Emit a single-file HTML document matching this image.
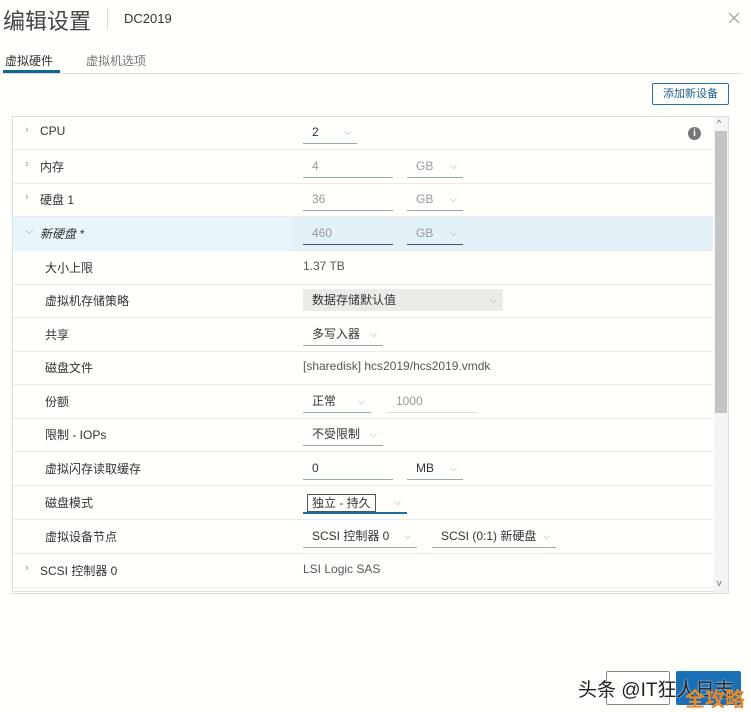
<!DOCTYPE html>
<html><head><meta charset="utf-8"><style>
*{margin:0;padding:0;box-sizing:border-box}
body{width:751px;height:711px;background:#fffffc;font-family:"Liberation Sans","Noto Sans CJK SC",sans-serif;color:#333;position:relative;overflow:hidden;font-size:12px}
.a{position:absolute;white-space:nowrap}
.row{position:absolute;left:13px;width:700px;height:34px;border-bottom:1px solid #eceae4}
.lab{position:absolute;top:8px;font-size:12px;color:#333}
.sel{position:absolute;top:8px;height:20px;border-bottom:1px solid #9aa;font-size:12px;padding-left:9px;line-height:16px;color:#333}
.dim{color:#999}
.chev{position:absolute;right:6px;top:0;color:#999;font-size:9px}
.arr{position:absolute;left:12px;top:8px;color:#999;font-size:11px}
</style></head><body>
<div class="a" style="left:3px;top:4px;font-size:22px;color:#444">编辑设置</div>
<div class="a" style="left:107px;top:8px;width:1px;height:22px;background:#ddd"></div>
<div class="a" style="left:124px;top:11px;font-size:13px;color:#333">DC2019</div>
<svg class="a" style="left:728px;top:12px" width="12" height="12"><path d="M1 1L11 11M11 1L1 11" stroke="#999" stroke-width="1.2"/></svg>
<div class="a" style="left:5px;top:52px;font-size:12px;color:#333">虚拟硬件</div>
<div class="a" style="left:3px;top:70px;width:57px;height:3px;background:#0f6a8f"></div>
<div class="a" style="left:86px;top:52px;font-size:12px;color:#777">虚拟机选项</div>
<div class="a" style="left:0;top:73px;width:741px;height:1px;background:#ddd"></div>
<div class="a" style="left:652px;top:83px;width:77px;height:22px;border:1px solid #2a6f9b;border-radius:2px;font-size:11px;color:#1a5f8f;text-align:center;line-height:20px">添加新设备</div>
<div class="a" style="left:12px;top:116px;width:717px;height:478px;border:1px solid #ddd;background:#fffffc"></div>
<div class="a" style="left:714px;top:117px;width:14px;height:476px;background:#f4f4f2"></div>
<div class="a" style="left:715px;top:131px;width:12px;height:282px;background:#c4c4c4"></div>
<div class="a" style="left:717px;top:118px;font-size:9px;color:#666">^</div>
<div class="a" style="left:717px;top:578px;font-size:9px;color:#666">v</div>
<div class="a" style="left:14px;top:591px;width:700px;height:2px;border-top:1px solid #ddd"></div>

<div class="row" style="top:116px"><span class="arr">›</span><span class="lab" style="left:27px">CPU</span><div class="sel" style="left:290px;width:54px">2<span class="chev">⌵</span></div><div class="a" style="left:675px;top:11px;width:13px;height:13px;border-radius:50%;background:#777;color:#fff;font-size:10px;text-align:center;line-height:13px;font-weight:bold">i</div></div>
<div class="row" style="top:150px"><span class="arr">›</span><span class="lab" style="left:27px">内存</span><div class="sel dim" style="left:290px;width:90px">4</div><div class="sel dim" style="left:394px;width:56px">GB<span class="chev">⌵</span></div></div>
<div class="row" style="top:183px"><span class="arr">›</span><span class="lab" style="left:27px">硬盘 1</span><div class="sel dim" style="left:290px;width:90px">36</div><div class="sel dim" style="left:394px;width:56px">GB<span class="chev">⌵</span></div></div>
<div class="row" style="top:217px;background:#e3f1f8"><div class="a" style="left:0;top:0;width:278px;height:34px;background:#e8f6fb"></div><span class="arr">⌵</span><span class="lab" style="left:27px;font-style:italic">新硬盘 *</span><div class="sel dim" style="left:290px;width:90px;border-color:#456">460</div><div class="sel dim" style="left:394px;width:56px;border-color:#456">GB<span class="chev">⌵</span></div></div>
<div class="row" style="top:251px"><span class="lab" style="left:32px">大小上限</span><span class="lab" style="left:290px;color:#555">1.37 TB</span></div>
<div class="row" style="top:284px"><span class="lab" style="left:32px">虚拟机存储策略</span><div class="a" style="left:290px;top:5px;width:200px;height:22px;background:#ebebe8;padding-left:9px;line-height:22px">数据存储默认值<span class="chev" style="top:0">⌵</span></div></div>
<div class="row" style="top:318px"><span class="lab" style="left:32px">共享</span><div class="sel" style="left:290px;width:80px">多写入器<span class="chev">⌵</span></div></div>
<div class="row" style="top:351px"><span class="lab" style="left:32px">磁盘文件</span><span class="lab" style="left:290px;color:#555">[sharedisk] hcs2019/hcs2019.vmdk</span></div>
<div class="row" style="top:385px"><span class="lab" style="left:32px">份额</span><div class="sel" style="left:290px;width:68px">正常<span class="chev">⌵</span></div><div class="sel dim" style="left:374px;width:90px;border-color:#ddd">1000</div></div>
<div class="row" style="top:418px"><span class="lab" style="left:32px">限制 - IOPs</span><div class="sel" style="left:290px;width:80px">不受限制<span class="chev">⌵</span></div></div>
<div class="row" style="top:452px"><span class="lab" style="left:32px">虚拟闪存读取缓存</span><div class="sel" style="left:290px;width:90px">0</div><div class="sel" style="left:394px;width:56px">MB<span class="chev">⌵</span></div></div>
<div class="row" style="top:486px"><span class="lab" style="left:32px">磁盘模式</span><div class="sel" style="left:290px;width:104px;border-bottom:2px solid #1a6f9f;padding-left:4px"><span style="border:1px solid #555;padding:0 4px;display:inline-block;height:18px">独立 - 持久</span><span class="chev">⌵</span></div></div>
<div class="row" style="top:520px"><span class="lab" style="left:32px">虚拟设备节点</span><div class="sel" style="left:290px;width:114px">SCSI 控制器 0<span class="chev">⌵</span></div><div class="sel" style="left:419px;width:124px">SCSI (0:1) 新硬盘<span class="chev">⌵</span></div></div>
<div class="row" style="top:554px"><span class="arr">›</span><span class="lab" style="left:27px">SCSI 控制器 0</span><span class="lab" style="left:290px;color:#555">LSI Logic SAS</span></div>

<div class="a" style="left:606px;top:671px;width:64px;height:34px;border:1px solid #888;border-radius:2px"></div>
<div class="a" style="left:676px;top:671px;width:65px;height:34px;background:#1a6fb5;border-radius:2px"></div>
<div class="a" style="left:578px;top:675px;font-size:19px;color:#222;text-shadow:0 0 2px #fff">头条 @IT狂人日志</div>
<div class="a" style="left:685px;top:683px;font-size:20px;font-weight:bold;color:#e88a2a">全攻略</div>
</body></html>
